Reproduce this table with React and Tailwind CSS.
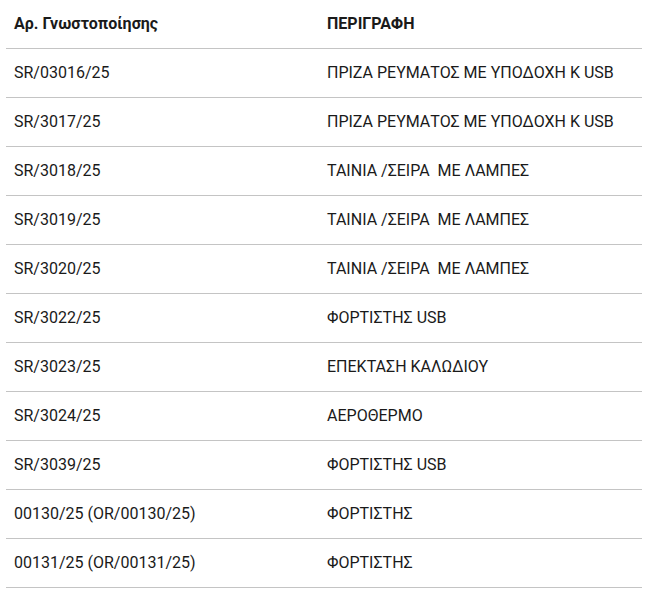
import React from "react";

const rows = [
  ["SR/03016/25", "ΠΡΙΖΑ ΡΕΥΜΑΤΟΣ ΜΕ ΥΠΟΔΟΧΗ Κ USB"],
  ["SR/3017/25", "ΠΡΙΖΑ ΡΕΥΜΑΤΟΣ ΜΕ ΥΠΟΔΟΧΗ Κ USB"],
  ["SR/3018/25", "ΤΑΙΝΙΑ /ΣΕΙΡΑ  ΜΕ ΛΑΜΠΕΣ"],
  ["SR/3019/25", "ΤΑΙΝΙΑ /ΣΕΙΡΑ  ΜΕ ΛΑΜΠΕΣ"],
  ["SR/3020/25", "ΤΑΙΝΙΑ /ΣΕΙΡΑ  ΜΕ ΛΑΜΠΕΣ"],
  ["SR/3022/25", "ΦΟΡΤΙΣΤΗΣ USB"],
  ["SR/3023/25", "ΕΠΕΚΤΑΣΗ ΚΑΛΩΔΙΟΥ"],
  ["SR/3024/25", "ΑΕΡΟΘΕΡΜΟ"],
  ["SR/3039/25", "ΦΟΡΤΙΣΤΗΣ USB"],
  ["00130/25 (OR/00130/25)", "ΦΟΡΤΙΣΤΗΣ"],
  ["00131/25 (OR/00131/25)", "ΦΟΡΤΙΣΤΗΣ"],
];

export default function App() {
  return (
    <div className="min-h-screen bg-white font-['Roboto',sans-serif] text-[#1a1a1a]">
      <div className="ml-[6px] w-[636px]">
        <div className="flex h-[49px] items-center border-b border-[#c4c4c4] text-[16px] font-bold">
          <div className="w-[313px] px-2">Αρ. Γνωστοποίησης</div>
          <div className="flex-1 px-2">ΠΕΡΙΓΡΑΦΗ</div>
        </div>
        {rows.map(([no, desc], i) => (
          <div
            key={i}
            className="flex h-[49px] items-center border-b border-[#c4c4c4] text-[16px]"
          >
            <div className="w-[313px] px-2 whitespace-pre">{no}</div>
            <div className="flex-1 px-2 whitespace-pre">{desc}</div>
          </div>
        ))}
      </div>
    </div>
  );
}
